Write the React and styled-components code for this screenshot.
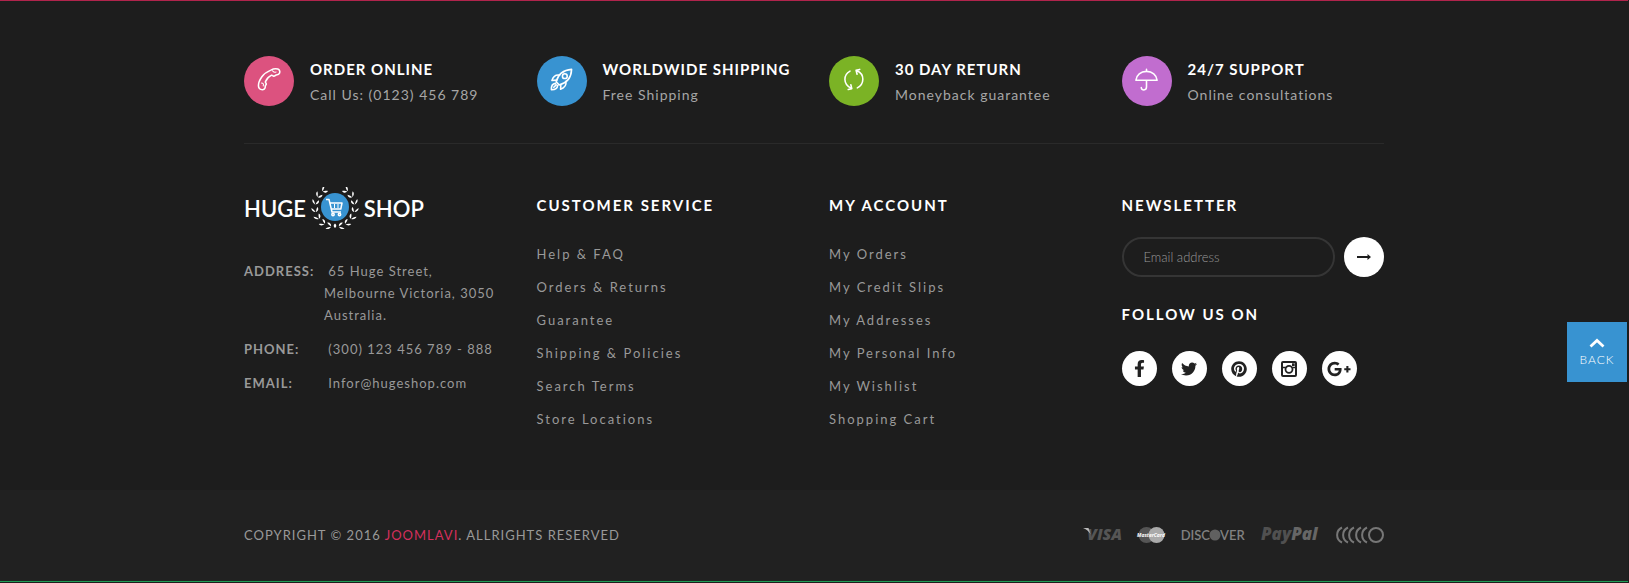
import React from "react";
import styled, { createGlobalStyle } from "styled-components";
import { FaFacebookF, FaTwitter, FaGooglePlusG } from "react-icons/fa";
import { ImPinterest } from "react-icons/im";

const GlobalStyle = createGlobalStyle`
  *, *::before, *::after { box-sizing: border-box; }
  body {
    margin: 0;
    background: #1d1d1d;
    color: #999;
    font-family: Lato, "Liberation Sans", sans-serif;
    font-size: 14px;
  }
`;

const Footer = styled.footer`
  margin-right: 1px;
  border-top: 1px solid #b0244c;
  border-bottom: 1px solid #1f9c55;
`;

const Container = styled.div`
  max-width: 1170px;
  margin: 0 auto;
  padding: 0 15px;
`;

const Columns = styled.div`
  display: grid;
  grid-template-columns: repeat(4, 1fr);
  column-gap: 30px;
  @media (max-width: 1100px) {
    grid-template-columns: repeat(2, 1fr);
    row-gap: 30px;
  }
  @media (max-width: 600px) {
    grid-template-columns: 1fr;
  }
`;

const Features = styled(Columns)`
  padding: 55px 0 36px;
  border-bottom: 1px solid #2a2a2a;
`;

const Feature = styled.div`
  display: flex;
  align-items: flex-start;
  gap: 16px;
`;

const FeatureIcon = styled.span`
  display: flex;
  flex: none;
  align-items: center;
  justify-content: center;
  width: 50px;
  height: 50px;
  padding-bottom: 3px;
  border-radius: 50%;
  background: ${(p) => p.$color};
  svg {
    width: 25px;
    height: 25px;
    fill: none;
    stroke: #fff;
    stroke-width: 1.5;
    stroke-linecap: round;
    stroke-linejoin: round;
  }
`;

const FeatureBody = styled.div`
  padding-top: 1px;
`;

const FeatureTitle = styled.h3`
  margin: 0;
  font-size: 15px;
  font-weight: 700;
  line-height: 25px;
  letter-spacing: 1px;
  text-transform: uppercase;
  white-space: nowrap;
  color: #fff;
`;

const FeatureText = styled.p`
  margin: 0;
  font-size: 14px;
  line-height: 25px;
  letter-spacing: 1px;
  color: #a6a6a6;
`;

const Main = styled(Columns)`
  padding: 44px 0 54px;
`;

const Logo = styled.a`
  display: flex;
  align-items: center;
  gap: 5px;
  height: 40px;
  margin-bottom: 32px;
  font-size: 22px;
  font-weight: 600;
  color: #fff;
  text-decoration: none;
`;

const Contact = styled.dl`
  display: grid;
  grid-template-columns: 80px 1fr;
  row-gap: 12px;
  margin: 0;
  font-size: 13px;
  line-height: 22px;
  letter-spacing: 1px;
  white-space: nowrap;
`;

const ContactLabel = styled.dt`
  font-weight: 700;
  text-transform: uppercase;
`;

const ContactValue = styled.dd`
  margin: 0;
`;

const Heading = styled.h2`
  margin: 0 0 22px;
  padding-top: 7px;
  font-size: 15px;
  font-weight: 700;
  line-height: 20px;
  letter-spacing: 2px;
  text-transform: uppercase;
  color: #fff;
`;

const LinkList = styled.ul`
  margin: 0;
  padding: 1px 0 0;
  list-style: none;
  font-size: 13px;
  line-height: 33px;
  letter-spacing: 2px;
`;

const FooterLink = styled.a`
  color: inherit;
  text-decoration: none;
  &:hover { color: #fff; }
`;

const Newsletter = styled.form`
  display: flex;
  gap: 9px;
  margin-bottom: 20px;
`;

const EmailInput = styled.input`
  flex: 1;
  min-width: 0;
  height: 40px;
  padding: 0 20px;
  border: 2px solid #353535;
  border-radius: 20px;
  background: transparent;
  color: #fff;
  font: 300 13px Lato, "Liberation Sans", sans-serif;
  &::placeholder { color: #999; opacity: 1; }
`;

const SubmitButton = styled.button`
  display: flex;
  align-items: center;
  justify-content: center;
  width: 40px;
  height: 40px;
  padding: 0;
  border: 0;
  border-radius: 50%;
  background: #fff;
  cursor: pointer;
`;

const SocialList = styled.ul`
  display: flex;
  gap: 15px;
  margin: 0;
  padding: 5px 0 0;
  list-style: none;
`;

const SocialLink = styled.a`
  display: flex;
  align-items: center;
  justify-content: center;
  width: 35px;
  height: 35px;
  border-radius: 50%;
  background: #fff;
  color: #222;
`;

const Bottom = styled.div`
  background: #212121;
`;

const BottomRow = styled(Container)`
  display: flex;
  flex-wrap: wrap;
  align-items: center;
  justify-content: space-between;
  min-height: 91px;
  padding-bottom: 2px;
`;

const Copyright = styled.p`
  margin: 0;
  font-size: 13px;
  line-height: 20px;
  letter-spacing: 1px;
  text-transform: uppercase;
`;

const Brand = styled.a`
  color: #d42f5c;
  text-decoration: none;
`;

const Payments = styled.ul`
  display: flex;
  align-items: center;
  gap: 15px;
  margin: 0;
  padding: 0;
  list-style: none;
  svg {
    display: block;
    overflow: visible;
    font-family: "Open Sans", "Liberation Sans", sans-serif;
  }
`;

const BackToTop = styled.button`
  position: fixed;
  top: 322px;
  right: 2px;
  display: flex;
  flex-direction: column;
  align-items: center;
  justify-content: center;
  gap: 3px;
  width: 60px;
  height: 60px;
  padding: 3px 0 0;
  border: 0;
  background: #3893d1;
  color: #fff;
  font: 300 12px/18px Lato, "Liberation Sans", sans-serif;
  letter-spacing: 1px;
  cursor: pointer;
`;

const PhoneIcon = () => (
  <svg viewBox="0 0 24 24" aria-hidden="true">
    <path d="M13.300 3C15.500 1.800 18 1.500 20 2c1.700.5 2.300 2.300 1.600 4-.5 1.300-1.900 1.500-3.200 1.700-.9.2-1.300 1.200-2.300 1.100-1.100-.2-1.300-1.200-2.400-.8-2.700 1.300-4.700 3.600-5.600 6.100-.3 1 .9 1.300.8 2.300-.1.800-.9 1-.9 1.900 0 1.400-.6 3-1.900 3.400-1.600.4-3.900-.4-4.400-2C.9 17 2.200 12.800 4.700 9.300 7 6.200 10.200 4.300 13.300 3z" />
    <path d="M14.900 3.600c.8 1.700 2 1.600 3.400 1.200M4.300 15.400c1.600.1 2.300 1 1.700 2.800" strokeWidth="1" />
  </svg>
);

const RocketIcon = () => (
  <svg viewBox="0 0 24 24" aria-hidden="true">
    <path d="M9.700 17.200 6.900 14.300C8.300 8.700 12 3 21.700 2.300 21.300 12 15.500 15.800 9.700 17.200z" />
    <circle cx="15.200" cy="8.800" r="2.300" />
    <path d="M10.100 7.800c-3.300-.6-5.800.8-7.300 5.100l4.600-.3M16.200 13.900c.6 3.300-.8 5.900-5.100 7.400l.3-4.500M6.200 15.700c-2.800.3-4.100 2.400-3.900 6.100 3.700.1 5.700-1.200 6-3.900M6.900 17.200 4.600 19.500" />
  </svg>
);

const ReturnIcon = () => (
  <svg viewBox="0 0 24 24" aria-hidden="true">
    <path d="M7.700 4C1.200 7.500.8 16.600 8.700 20.400M6 21.600l3.400-.8-.9-3.800M14.700 20C21.600 16.600 22 7 14.600 3.600M17 2.300l-3.500.8 1 3.900" />
  </svg>
);

const UmbrellaIcon = () => (
  <svg viewBox="0 0 24 24" aria-hidden="true">
    <path d="M1.800 12.700C2.300 7.500 6.500 4.200 12 4.200s9.700 3.300 10.200 8.500zM12 2.300v1.900M12 12.700v6.600c0 3.600-5 3.500-5 .3" />
  </svg>
);

const leafAngles = [32, 54, 76, 98, 120, 142, 162];

const Emblem = () => (
  <svg width="48" height="42" viewBox="0 0 48 42" aria-hidden="true">
    <circle cx="24" cy="20" r="14" fill="#3893d1" />
    <g fill="#fff">
      {[1, -1].map((side) => (
        <g key={side} transform={`translate(24 20) scale(${side} 1)`}>
          {leafAngles.map((a) => (
            <g key={a} transform={`rotate(${a}) translate(0 -20.500) scale(1.150)`}>
              <path d="M2 .5C.8-.2-.8-.8-2-2.600-.1-3.100 1.600-1.600 2 .5z" />
              <path d="M2 .8C.8 1.200-.8 1.400-2.200 2.800-.1 3.900 1.600 2.600 2 .8z" />
            </g>
          ))}
        </g>
      ))}
      <path d="M24 36.500c-2 1.500-1.500 3.500 0 4.500 1.500-1 2-3 0-4.500z" />
    </g>
    <g fill="none" stroke="#fff" strokeWidth="1.500" strokeLinejoin="round">
      <path d="M15 12.500h3l3 12.500h9M19 16h12l-1.200 6H20.400" />
      <path d="M23.500 17v4M27 17v4" strokeWidth="1" />
      <circle cx="22" cy="27.500" r="1.200" />
      <circle cx="28.500" cy="27.500" r="1.200" />
    </g>
  </svg>
);

const InstagramIcon = () => (
  <svg width="16" height="16" viewBox="0 0 16 16" aria-hidden="true" fill="none" stroke="currentColor">
    <rect x="1" y="1" width="14" height="14" rx="1" strokeWidth="2" />
    <circle cx="8" cy="8.300" r="3.500" strokeWidth="1.800" />
    <path d="M1.500 6.500h3.200M11.300 6.500h3.200" strokeWidth="1.400" />
    <rect x="11" y="2.300" width="2.700" height="2.700" fill="currentColor" stroke="none" />
  </svg>
);

const ArrowIcon = () => (
  <svg width="14" height="8" viewBox="0 0 14 8" aria-hidden="true">
    <path d="M0 3h10.500V1L14 4l-3.500 3V5H0z" fill="#1d1d1d" />
  </svg>
);

const ChevronUp = () => (
  <svg width="16" height="10" viewBox="0 0 16 10" aria-hidden="true">
    <path d="m1.500 8.500 6.500-6 6.500 6" fill="none" stroke="#fff" strokeWidth="2.800" />
  </svg>
);

const Visa = () => (
  <svg width="40" height="18" viewBox="0 0 40 18" role="img" aria-label="Visa">
    <text x="4" y="14" fontSize="16" fontWeight="800" fontStyle="italic" fill="#555">VISA</text>
    <path d="M0 2h5.500l2 6C5.500 5 3 3 0 2z" fill="#bbb" />
  </svg>
);

const MasterCard = () => (
  <svg width="27" height="18" viewBox="0 0 27 18" role="img" aria-label="MasterCard">
    <circle cx="8.500" cy="9" r="8" fill="#555" />
    <circle cx="18.500" cy="9" r="8" fill="#aaa" />
    <text x="13" y="11" textAnchor="middle" fontSize="5" fontWeight="700" fontStyle="italic" fill="#fff">MasterCard</text>
  </svg>
);

const Discover = () => (
  <svg width="66" height="18" viewBox="0 0 66 18" role="img" aria-label="Discover" fill="#808080">
    <circle cx="35" cy="9" r="5.500" fill="#606060" />
    <text x="30" y="14" textAnchor="end" fontFamily="Lato" fontSize="13" fontWeight="600">DISC</text>
    <text x="40" y="14" fontFamily="Lato" fontSize="13" fontWeight="600">VER</text>
  </svg>
);

const PayPal = () => (
  <svg width="60" height="20" viewBox="0 0 60 20" role="img" aria-label="PayPal">
    <text x="0" y="15" fontSize="17" fontWeight="800" fontStyle="italic" fill="#505050">
      Pay<tspan fill="#666">Pal</tspan>
    </text>
  </svg>
);

const Rings = () => (
  <svg width="48" height="18" viewBox="0 0 48 18" role="img" aria-label="Cirrus" fill="none" stroke="#777" strokeWidth="2">
    {[0, 6, 12, 19, 25].map((x) => (
      <path key={x} d={`M${x + 6} 1.500c-6.500 3-6.500 12 0 15`} />
    ))}
    <circle cx="40" cy="9" r="7" />
  </svg>
);

const features = [
  { color: "#dc527f", Icon: PhoneIcon, title: "Order online", text: "Call Us: (0123) 456 789" },
  { color: "#3893d1", Icon: RocketIcon, title: "Worldwide shipping", text: "Free Shipping" },
  { color: "#7bb325", Icon: ReturnIcon, title: "30 day return", text: "Moneyback guarantee" },
  { color: "#c16dcf", Icon: UmbrellaIcon, title: "24/7 support", text: "Online consultations" },
];

const linkColumns = [
  {
    title: "Customer service",
    links: ["Help & FAQ", "Orders & Returns", "Guarantee", "Shipping & Policies", "Search Terms", "Store Locations"],
  },
  {
    title: "My account",
    links: ["My Orders", "My Credit Slips", "My Addresses", "My Personal Info", "My Wishlist", "Shopping Cart"],
  },
];

const socials = [
  { name: "Facebook", icon: <FaFacebookF size={17} /> },
  { name: "Twitter", icon: <FaTwitter size={16} /> },
  { name: "Pinterest", icon: <ImPinterest size={18} /> },
  { name: "Instagram", icon: <InstagramIcon /> },
  { name: "Google Plus", icon: <FaGooglePlusG size={24} /> },
];

const payments = [Visa, MasterCard, Discover, PayPal, Rings];

export default function App() {
  return (
    <>
      <GlobalStyle />
      <Footer>
        <Container>
          <Features>
            {features.map(({ color, Icon, title, text }) => (
              <Feature key={title}>
                <FeatureIcon $color={color}><Icon /></FeatureIcon>
                <FeatureBody>
                  <FeatureTitle>{title}</FeatureTitle>
                  <FeatureText>{text}</FeatureText>
                </FeatureBody>
              </Feature>
            ))}
          </Features>
          <Main>
            <div>
              <Logo href="#">
                <span>HUGE</span>
                <Emblem />
                <span>SHOP</span>
              </Logo>
              <Contact>
                <ContactLabel>Address:</ContactLabel>
                <ContactValue>
                  &nbsp;65 Huge Street,<br />Melbourne Victoria, 3050<br />Australia.
                </ContactValue>
                <ContactLabel>Phone:</ContactLabel>
                <ContactValue>&nbsp;(300) 123 456 789 - 888</ContactValue>
                <ContactLabel>Email:</ContactLabel>
                <ContactValue>&nbsp;Infor@hugeshop.com</ContactValue>
              </Contact>
            </div>
            {linkColumns.map(({ title, links }) => (
              <nav key={title} aria-label={title}>
                <Heading>{title}</Heading>
                <LinkList>
                  {links.map((link) => (
                    <li key={link}><FooterLink href="#">{link}</FooterLink></li>
                  ))}
                </LinkList>
              </nav>
            ))}
            <div>
              <Heading>Newsletter</Heading>
              <Newsletter onSubmit={(e) => e.preventDefault()}>
                <EmailInput type="email" placeholder="Email address" aria-label="Email address" />
                <SubmitButton type="submit" aria-label="Subscribe"><ArrowIcon /></SubmitButton>
              </Newsletter>
              <Heading>Follow us on</Heading>
              <SocialList>
                {socials.map(({ name, icon }) => (
                  <li key={name}><SocialLink href="#" aria-label={name}>{icon}</SocialLink></li>
                ))}
              </SocialList>
            </div>
          </Main>
        </Container>
        <Bottom>
          <BottomRow>
            <Copyright>
              Copyright © 2016 <Brand href="#">Joomlavi</Brand>. Allrights reserved
            </Copyright>
            <Payments>
              {payments.map((Mark, i) => (
                <li key={i}><Mark /></li>
              ))}
            </Payments>
          </BottomRow>
        </Bottom>
      </Footer>
      <BackToTop type="button" onClick={() => window.scrollTo({ top: 0, behavior: "smooth" })}>
        <ChevronUp />
        BACK
      </BackToTop>
    </>
  );
}
